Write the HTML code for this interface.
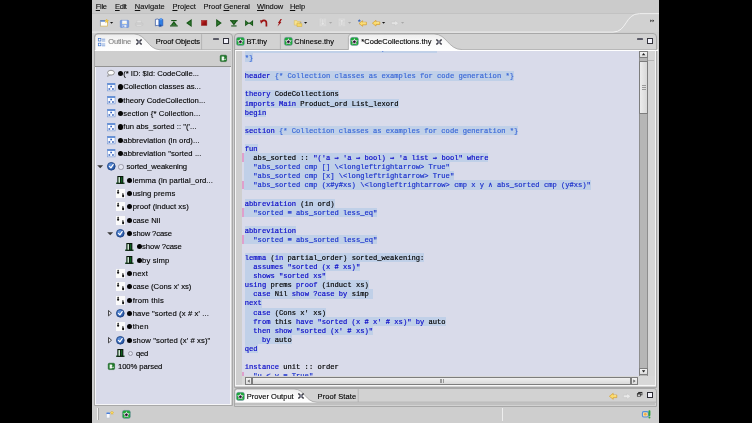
<!DOCTYPE html>
<html><head><meta charset="utf-8"><title>IDE</title><style>
html,body{margin:0;padding:0;background:#000;}
body{width:752px;height:423px;position:relative;overflow:hidden;font-family:"Liberation Sans", sans-serif;}
#root{position:absolute;left:0;top:0;width:752px;height:423px;will-change:transform;transform:translateZ(0);filter:blur(0.3px);}
.t{position:absolute;white-space:pre;line-height:10px;font-family:"Liberation Sans", sans-serif;-webkit-text-stroke:0.12px;}
.m{position:absolute;white-space:pre;font-family:"Liberation Mono", monospace;font-size:7.12px;line-height:9px;height:9px;-webkit-text-stroke:0.18px;}
.m i{font-style:normal;}
svg{position:absolute;overflow:visible;}
u{text-decoration:underline;text-decoration-thickness:0.6px;text-underline-offset:0.6px;}
</style></head><body><div id="root">
<div style="position:absolute;left:92.00px;top:0.00px;width:567.00px;height:423.00px;background:#cecece;"></div>
<div style="position:absolute;left:92.00px;top:0.00px;width:567.00px;height:13.20px;background:#cbcbcb;"></div>
<div style="position:absolute;left:92.00px;top:12.80px;width:567.00px;height:1.00px;background:#c2c2c2;"></div>
<div style="position:absolute;left:92.00px;top:13.90px;width:567.00px;height:18.60px;background:#d1d1d1;"></div>
<span class="t" id="t0" style="left:95.70px;top:1.70px;font-size:7.5px;color:#111;letter-spacing:-0.277px;"><u>F</u>ile</span>
<span class="t" id="t1" style="left:115.00px;top:1.70px;font-size:7.5px;color:#111;letter-spacing:-0.359px;"><u>E</u>dit</span>
<span class="t" id="t2" style="left:134.80px;top:1.70px;font-size:7.5px;color:#111;letter-spacing:0.049px;"><u>N</u>avigate</span>
<span class="t" id="t3" style="left:172.40px;top:1.70px;font-size:7.5px;color:#111;letter-spacing:0.034px;"><u>P</u>roject</span>
<span class="t" id="t4" style="left:203.60px;top:1.70px;font-size:7.5px;color:#111;letter-spacing:-0.025px;">Proof <u>G</u>eneral</span>
<span class="t" id="t5" style="left:257.00px;top:1.70px;font-size:7.5px;color:#111;letter-spacing:-0.117px;"><u>W</u>indow</span>
<span class="t" id="t6" style="left:289.90px;top:1.70px;font-size:7.5px;color:#111;letter-spacing:-0.084px;"><u>H</u>elp</span>
<svg style="left:100.00px;top:19.20px" width="8.6" height="7.6" viewBox="0 0 8.6 7.6"><rect x="0.4" y="1.5" width="7" height="5.6" fill="#fdfdfb" stroke="#d9b44a" stroke-width="0.7"/><path d="M0.1 1.2h5.2v1.5h-5.2z" fill="#4f7fd0"/><path d="M0.4 1.5v5.6" stroke="#8ea6d8" stroke-width="0.6"/><path d="M6.7 0l.6 1.3 1.3.2-1 .9.3 1.4-1.2-.7-1.2.7.3-1.4-1-.9 1.3-.2z" fill="#f6cf45" stroke="#cfa02a" stroke-width="0.3"/></svg>
<svg style="left:110.20px;top:22.40px" width="3.2" height="1.8" viewBox="0 0 3.2 1.8"><path d="M0 0h3.2l-1.6 1.7z" fill="#111"/></svg>
<svg style="left:120.00px;top:19.50px" width="9" height="7.8" viewBox="0 0 9 7.8"><rect x="0.35" y="0.35" width="8.3" height="7.1" rx="0.7" fill="#7fa3e3" stroke="#6a8fd6" stroke-width="0.7"/><rect x="2.2" y="0.6" width="4.6" height="3.5" fill="#f6f8fd"/><rect x="2.2" y="2.9" width="4.6" height="0.7" fill="#f3e7b0"/><rect x="2.6" y="4.9" width="3.8" height="2.5" fill="#e6ecf8"/><rect x="3.2" y="5.4" width="1.1" height="1.7" fill="#6a8fd6"/></svg>
<svg style="left:135.30px;top:20.00px" width="8.2" height="6.6" viewBox="0 0 8.2 6.6"><rect x="2" y="0.3" width="4.2" height="2.8" fill="#dedede" stroke="#c9c9c9" stroke-width="0.5"/><rect x="0.3" y="2.8" width="7.6" height="3" rx="0.9" fill="#cfcfcf" stroke="#c2c2c2" stroke-width="0.5"/><rect x="1.5" y="4.9" width="5.2" height="1.4" fill="#dcdcdc" stroke="#c6c6c6" stroke-width="0.4"/></svg>
<svg style="left:155.00px;top:17.80px" width="8.2" height="9.4" viewBox="0 0 8.2 9.4"><path d="M0.4 1.4q2-.9 3.7.2v6.4q-1.7-1.1-3.7-.2z" fill="#f8fafe" stroke="#2c4f9c" stroke-width="0.7"/><path d="M7.8 1.4q-2-.9-3.7.2v6.4q1.7-1.1 3.7-.2z" fill="#2f7fe4" stroke="#2458b8" stroke-width="0.7"/><path d="M4.6 0.4q1.2-.6 2.4-.2v2q-1.2-.4-2.4.2z" fill="#5b9bee"/><path d="M4.4 6.6v2.6l1-.8 1 .8v-2.4z" fill="#1f4c9e"/></svg>
<svg style="left:170.30px;top:19.80px" width="7.8" height="6.6" viewBox="0 0 7.8 6.6"><path d="M1.2 0h5.4v1.1h-5.4z" fill="#155415"/><path d="M3.9 1.1l3.3 4.3h-6.6z" fill="#155415"/><path d="M3.9 2.9l1.5 2h-3z" fill="#347f34"/><path d="M0 5.4h7.8v1.1h-7.8z" fill="#155415"/></svg>
<svg style="left:186.10px;top:18.80px" width="5.9" height="8.2" viewBox="0 0 5.9 8.2"><path d="M5.7 0.1v8l-5.6-4z" fill="#155415"/><path d="M4.6 2.3v3.6l-2.5-1.8z" fill="#347f34"/></svg>
<svg style="left:201.00px;top:19.90px" width="6.2" height="5.8" viewBox="0 0 6.2 5.8"><defs><linearGradient id="rg" x1="0" y1="0" x2="1" y2="1"><stop offset="0" stop-color="#c84040"/><stop offset="0.45" stop-color="#a41414"/><stop offset="1" stop-color="#7e0a0a"/></linearGradient></defs><rect x="0.3" y="0.3" width="5.6" height="5.2" fill="url(#rg)" stroke="#9a2a2a" stroke-width="0.5"/></svg>
<svg style="left:216.10px;top:18.80px" width="5.9" height="8.2" viewBox="0 0 5.9 8.2"><path d="M0.2 0.1v8l5.6-4z" fill="#155415"/><path d="M1.3 2.3v3.6l2.5-1.8z" fill="#347f34"/></svg>
<svg style="left:230.30px;top:19.80px" width="7.8" height="6.6" viewBox="0 0 7.8 6.6"><path d="M0 0.1h7.8v1.1h-7.8z" fill="#155415"/><path d="M3.9 5.4l3.3-4.3h-6.6z" fill="#155415"/><path d="M3.9 3.6l1.5-2h-3z" fill="#347f34"/><path d="M1.2 5.4h5.4v1.1h-5.4z" fill="#155415"/></svg>
<svg style="left:244.70px;top:19.70px" width="8.2" height="6.4" viewBox="0 0 8.2 6.4"><path d="M0.1 0.1v6.2l4-3.1z" fill="#155415"/><path d="M8.1 0.1v6.2l-4-3.1z" fill="#155415"/><path d="M1.1 2v2.4l1.6-1.2zM7.1 2v2.4l-1.6-1.2z" fill="#347f34"/><path d="M3.5 2.4h1.2v1.6h-1.2z" fill="#155415"/></svg>
<svg style="left:259.80px;top:19.20px" width="7.6" height="7.4" viewBox="0 0 7.6 7.4"><path d="M6.4 7.4V3.9q0-2.5-2.4-2.5q-1.3 0-2 .9" fill="none" stroke="#9c1414" stroke-width="1.7"/><path d="M0 1.2l3.6 0.5-2.6 3z" fill="#9c1414"/></svg>
<svg style="left:276.80px;top:19.20px" width="5" height="7.4" viewBox="0 0 5 7.4"><path d="M3.6 0l1.3.1-1.6 3 1.1.1-3.9 4.2 1.5-3.4-1.1-.1z" fill="#9c1414"/></svg>
<svg style="left:294.00px;top:19.70px" width="8.2" height="6.8" viewBox="0 0 8.2 6.8"><path d="M0.3 0.6h2.6l.6.9h3.4v3.6h-6.6z" fill="#f7e291" stroke="#d9bb55" stroke-width="0.5"/><path d="M3 3h2l.5.7h2.4v2.8h-4.9z" fill="#f5d768" stroke="#cfa83a" stroke-width="0.5"/><rect x="5.6" y="2.2" width="1.6" height="1" fill="#9a9a9a"/></svg>
<svg style="left:303.90px;top:22.20px" width="3.2" height="1.8" viewBox="0 0 3.2 1.8"><path d="M0 0h3.2l-1.6 1.7z" fill="#111"/></svg>
<svg style="left:318.80px;top:18.20px" width="7.6" height="9" viewBox="0 0 7.6 9"><rect x="0.3" y="0.3" width="7" height="8.2" rx="0.8" fill="#dadada" stroke="#d0d0d0" stroke-width="0.4"/><path d="M3 1h1.6v4h1.3l-2.1 2.6-2.1-2.6h1.3z" fill="#e6e6e6" stroke="#c8c8c8" stroke-width="0.4"/></svg>
<svg style="left:328.60px;top:21.80px" width="3.2" height="1.8" viewBox="0 0 3.2 1.8"><path d="M0 0h3.2l-1.6 1.7z" fill="#a8a8a8"/></svg>
<svg style="left:338.20px;top:18.20px" width="7.6" height="9" viewBox="0 0 7.6 9"><rect x="0.3" y="0.3" width="7" height="8.2" rx="0.8" fill="#dadada" stroke="#d0d0d0" stroke-width="0.4"/><path d="M3 7.6h1.6v-4h1.3l-2.1-2.6-2.1 2.6h1.3z" fill="#e6e6e6" stroke="#c8c8c8" stroke-width="0.4"/></svg>
<svg style="left:347.90px;top:21.80px" width="3.2" height="1.8" viewBox="0 0 3.2 1.8"><path d="M0 0h3.2l-1.6 1.7z" fill="#a8a8a8"/></svg>
<svg style="left:357.90px;top:19.40px" width="8.8" height="7.4" viewBox="0 0 8.8 7.4"><path d="M8.4 3.2v2.6h-3.8v1.5l-3.6-2.8 3.6-2.8v1.5z" fill="#fbdc6e" stroke="#d2941c" stroke-width="0.6"/><path d="M4.8 3.8h3" stroke="#fdeeb0" stroke-width="0.6"/><path d="M1.3 0l.5 1 1 .2-.7.7.2 1-1-.5-1 .5.2-1-.7-.7 1-.2z" fill="#3f68b8"/></svg>
<svg style="left:372.20px;top:19.90px" width="8.2" height="6.4" viewBox="0 0 8.2 6.4"><path d="M7.8 1.9v2.6h-3.8v1.6l-3.6-2.9 3.6-2.9v1.6z" fill="#fbdc6e" stroke="#d2941c" stroke-width="0.6"/><path d="M4.2 2.5h3" stroke="#fdeeb0" stroke-width="0.6"/></svg>
<svg style="left:381.80px;top:22.20px" width="3.2" height="1.8" viewBox="0 0 3.2 1.8"><path d="M0 0h3.2l-1.6 1.7z" fill="#111"/></svg>
<svg style="left:391.10px;top:19.90px" width="8" height="6.4" viewBox="0 0 8 6.4"><path d="M0.4 1.9v2.6h3.6v1.6l3.6-2.9-3.6-2.9v1.6z" fill="#e4e4e4" stroke="#c8c8c8" stroke-width="0.6"/></svg>
<svg style="left:401.10px;top:22.20px" width="3.2" height="1.8" viewBox="0 0 3.2 1.8"><path d="M0 0h3.2l-1.6 1.7z" fill="#a8a8a8"/></svg>
<svg style="left:92.00px;top:0.00px" width="567" height="40" viewBox="0 0 567 40"><path d="M0 32.1H521C535 32.1 533 13.6 547.5 13.6H567" fill="none" stroke="#f4f4f4" stroke-width="0.9"/><path d="M558.4 19.4l1.5 1.4-1.5 1.4zM560.6 19.4l1.5 1.4-1.5 1.4z" fill="#111"/></svg>
<div style="position:absolute;left:94.0px;top:33.3px;width:137.3px;height:371.2px;border:0.8px solid #a8a8a8;border-radius:4px 4px 0 0;background:#d2d2d2;box-sizing:content-box"></div>
<div style="position:absolute;left:94.80px;top:50.20px;width:136.70px;height:16.60px;background:#cecece;"></div>
<div style="position:absolute;left:94.80px;top:66.10px;width:136.70px;height:0.80px;background:#939393;"></div>
<div style="position:absolute;left:94.80px;top:49.80px;width:136.70px;height:0.80px;background:#f2f2f2;"></div>
<div style="position:absolute;left:94.90px;top:66.80px;width:136.60px;height:338.20px;background:#f6f6f8;"></div>
<div style="position:absolute;left:96.20px;top:66.80px;width:133.80px;height:336.80px;background:#d9dbea;"></div>
<div style="position:absolute;left:234.0px;top:33.3px;width:421.20000000000005px;height:352.4px;border:0.8px solid #a8a8a8;border-radius:4px 4px 0 0;background:#d2d2d2;box-sizing:content-box"></div>
<div style="position:absolute;left:234.0px;top:388.4px;width:421.20000000000005px;height:16.200000000000045px;border:0.8px solid #a8a8a8;border-radius:3px 3px 0 0;background:#d2d2d2;box-sizing:content-box"></div>
<svg style="left:234.00px;top:33.00px" width="424" height="18" viewBox="0 0 424 18"><defs><linearGradient id="tg" x1="0" y1="0" x2="0" y2="1"><stop offset="0" stop-color="#ececec"/><stop offset="0.55" stop-color="#fbfbfb"/><stop offset="1" stop-color="#ffffff"/></linearGradient></defs><path d="M114.4 17V4.4Q114.4 1 117.6 1H200C213 1 214 16.6 228 16.6H424V18H114.4z" fill="url(#tg)"/><path d="M0.6 16.6H114.4V4.4Q114.4 1 117.6 1H200C213 1 214 16.6 228 16.6H423" fill="none" stroke="#9c9c9c" stroke-width="0.7"/><path d="M46.4 1.2V16.4" stroke="#a8a8a8" stroke-width="0.7"/></svg>
<div style="position:absolute;left:234.80px;top:50.00px;width:420.60px;height:1.00px;background:#ffffff;"></div>
<svg style="left:236.10px;top:37.10px" width="8.8" height="8.8" viewBox="0 0 10 10"><rect x="0.4" y="0.4" width="9.2" height="9.2" rx="2.2" fill="#1da83a" stroke="#8f86c4" stroke-width="0.5"/><path d="M5 1.3l1.15 2.5 2.7.3-2 1.85.55 2.7L5 7.3 2.6 8.65l.55-2.7-2-1.85 2.7-.3z" fill="#e9dcea"/><path d="M5 3.3l.65 1.3 1.4.2-1 1 .25 1.45L5 6.55l-1.3.7.25-1.45-1-1 1.4-.2z" fill="#2a0a2e"/></svg>
<span class="t" id="t7" style="left:246.40px;top:37.20px;font-size:7.5px;color:#000;letter-spacing:-0.024px;">BT.thy</span>
<svg style="left:284.10px;top:37.10px" width="8.8" height="8.8" viewBox="0 0 10 10"><rect x="0.4" y="0.4" width="9.2" height="9.2" rx="2.2" fill="#1da83a" stroke="#8f86c4" stroke-width="0.5"/><path d="M5 1.3l1.15 2.5 2.7.3-2 1.85.55 2.7L5 7.3 2.6 8.65l.55-2.7-2-1.85 2.7-.3z" fill="#e9dcea"/><path d="M5 3.3l.65 1.3 1.4.2-1 1 .25 1.45L5 6.55l-1.3.7.25-1.45-1-1 1.4-.2z" fill="#2a0a2e"/></svg>
<span class="t" id="t8" style="left:294.20px;top:37.20px;font-size:7.5px;color:#000;letter-spacing:0.026px;">Chinese.thy</span>
<svg style="left:350.10px;top:37.10px" width="8.8" height="8.8" viewBox="0 0 10 10"><rect x="0.4" y="0.4" width="9.2" height="9.2" rx="2.2" fill="#1da83a" stroke="#8f86c4" stroke-width="0.5"/><path d="M5 1.3l1.15 2.5 2.7.3-2 1.85.55 2.7L5 7.3 2.6 8.65l.55-2.7-2-1.85 2.7-.3z" fill="#e9dcea"/><path d="M5 3.3l.65 1.3 1.4.2-1 1 .25 1.45L5 6.55l-1.3.7.25-1.45-1-1 1.4-.2z" fill="#2a0a2e"/></svg>
<span class="t" id="t9" style="left:361.30px;top:37.20px;font-size:7.5px;color:#000;letter-spacing:0.029px;">*CodeCollections.thy</span>
<svg style="left:435.90px;top:38.80px" width="6" height="6" viewBox="0 0 6 6"><path d="M0.9 0.9L5.1 5.1M5.1 0.9L0.9 5.1" stroke="#22222c" stroke-width="1.4" stroke-linecap="square"/><path d="M1.7 1.7L4.3 4.3M4.3 1.7L1.7 4.3" stroke="#b8bcd0" stroke-width="0.6"/></svg>
<div style="position:absolute;left:637.40px;top:38.00px;width:5.60px;height:1.90px;background:#5a5a66;border-radius:0.4px"></div>
<div style="position:absolute;left:646.9px;top:37.8px;width:6.1px;height:5.8px;box-sizing:border-box;border:0.55px solid #33333c;border-top-width:1.4px;background:#f2f2fa"></div>
<div style="position:absolute;left:234.80px;top:51.00px;width:7.20px;height:334.20px;background:#cfcfcf;"></div>
<div style="position:absolute;left:234.80px;top:51.00px;width:1.20px;height:334.20px;background:#f4f4f4;"></div>
<div style="position:absolute;left:241.90px;top:51.00px;width:397.30px;height:325.30px;background:#d9dbea;"></div>
<div style="position:absolute;left:234.8px;top:51.0px;width:404.40000000000003px;height:325.3px;overflow:hidden">
<div style="position:absolute;left:10.00px;top:-6.89px;width:192.28px;height:9.14px;background:#c0d0e8;"></div>
<div class="m" style="left:10.00px;top:-5.99px;letter-spacing:0.0063px"><i style="color:#3a68d8">    Author:     Florian Haftmann, TU Muenchen</i></div>
<div style="position:absolute;left:10.00px;top:2.20px;width:8.55px;height:9.14px;background:#c0d0e8;"></div>
<div class="m" style="left:10.00px;top:3.10px;letter-spacing:0.0063px"><i style="color:#3a68d8">*}</i></div>
<div style="position:absolute;left:10.00px;top:20.38px;width:269.20px;height:9.14px;background:#c0d0e8;"></div>
<div class="m" style="left:10.00px;top:21.28px;letter-spacing:0.0063px"><i style="color:#0a0ac8">header</i><i style="color:#3a68d8"> {* Collection classes as examples for code generation *}</i></div>
<div style="position:absolute;left:10.00px;top:38.55px;width:94.01px;height:9.14px;background:#c0d0e8;"></div>
<div class="m" style="left:10.00px;top:39.45px;letter-spacing:0.0063px"><i style="color:#0a0ac8">theory</i><i style="color:#000"> CodeCollections</i></div>
<div style="position:absolute;left:10.00px;top:47.64px;width:153.83px;height:9.14px;background:#c0d0e8;"></div>
<div class="m" style="left:10.00px;top:48.54px;letter-spacing:0.0063px"><i style="color:#0a0ac8">imports</i><i style="color:#0a0ac8"> Main</i><i style="color:#000"> Product_ord List_lexord</i></div>
<div style="position:absolute;left:10.00px;top:56.73px;width:21.36px;height:9.14px;background:#c0d0e8;"></div>
<div class="m" style="left:10.00px;top:57.63px;letter-spacing:0.0063px"><i style="color:#0a0ac8">begin</i></div>
<div style="position:absolute;left:10.00px;top:74.90px;width:273.47px;height:9.14px;background:#c0d0e8;"></div>
<div class="m" style="left:10.00px;top:75.80px;letter-spacing:0.0063px"><i style="color:#0a0ac8">section</i><i style="color:#3a68d8"> {* Collection classes as examples for code generation *}</i></div>
<div style="position:absolute;left:10.00px;top:93.08px;width:12.82px;height:9.14px;background:#c0d0e8;"></div>
<div class="m" style="left:10.00px;top:93.98px;letter-spacing:0.0063px"><i style="color:#0a0ac8">fun</i></div>
<div style="position:absolute;left:9.40px;top:102.17px;width:244.16px;height:9.14px;background:#c0d0e8;"></div>
<div class="m" style="left:10.00px;top:103.07px;letter-spacing:0.0063px"><i style="color:#000">  abs_sorted :: </i><i style="color:#0a0ac8">"('a ⇒ 'a ⇒ bool) ⇒ 'a list ⇒ bool"</i><i style="color:#0a0ac8"> where</i></div>
<div style="position:absolute;left:9.40px;top:111.26px;width:205.70px;height:9.14px;background:#c0d0e8;"></div>
<div class="m" style="left:10.00px;top:112.16px;letter-spacing:0.0063px"><i style="color:#1a30cc">  "abs_sorted cmp [] \&lt;longleftrightarrow&gt; True"</i></div>
<div style="position:absolute;left:9.40px;top:120.34px;width:209.98px;height:9.14px;background:#c0d0e8;"></div>
<div class="m" style="left:10.00px;top:121.24px;letter-spacing:0.0063px"><i style="color:#1a30cc">  "abs_sorted cmp [x] \&lt;longleftrightarrow&gt; True"</i></div>
<div style="position:absolute;left:9.40px;top:129.43px;width:346.71px;height:9.14px;background:#c0d0e8;"></div>
<div class="m" style="left:10.00px;top:130.33px;letter-spacing:0.0063px"><i style="color:#1a30cc">  "abs_sorted cmp (x#y#xs) \&lt;longleftrightarrow&gt; cmp x y ∧ abs_sorted cmp (y#xs)"</i></div>
<div style="position:absolute;left:10.00px;top:147.61px;width:89.73px;height:9.14px;background:#c0d0e8;"></div>
<div class="m" style="left:10.00px;top:148.51px;letter-spacing:0.0063px"><i style="color:#0a0ac8">abbreviation</i><i style="color:#000"> (in ord)</i></div>
<div style="position:absolute;left:9.40px;top:156.70px;width:133.06px;height:9.14px;background:#c0d0e8;"></div>
<div class="m" style="left:10.00px;top:157.60px;letter-spacing:0.0063px"><i style="color:#1a30cc">  "sorted ≡ abs_sorted less_eq"</i></div>
<div style="position:absolute;left:10.00px;top:174.87px;width:51.28px;height:9.14px;background:#c0d0e8;"></div>
<div class="m" style="left:10.00px;top:175.77px;letter-spacing:0.0063px"><i style="color:#0a0ac8">abbreviation</i></div>
<div style="position:absolute;left:9.40px;top:183.96px;width:133.06px;height:9.14px;background:#c0d0e8;"></div>
<div class="m" style="left:10.00px;top:184.86px;letter-spacing:0.0063px"><i style="color:#1a30cc">  "sorted ≡ abs_sorted less_eq"</i></div>
<div style="position:absolute;left:10.00px;top:202.14px;width:179.47px;height:9.14px;background:#c0d0e8;"></div>
<div class="m" style="left:10.00px;top:203.04px;letter-spacing:0.0063px"><i style="color:#0a0ac8">lemma</i><i style="color:#000"> (</i><i style="color:#0a0ac8">in</i><i style="color:#000"> partial_order) sorted_weakening:</i></div>
<div style="position:absolute;left:10.00px;top:211.22px;width:115.37px;height:9.14px;background:#c0d0e8;"></div>
<div class="m" style="left:10.00px;top:212.12px;letter-spacing:0.0063px"><i style="color:#0a0ac8">  assumes "sorted (x # xs)"</i></div>
<div style="position:absolute;left:10.00px;top:220.31px;width:81.19px;height:9.14px;background:#c0d0e8;"></div>
<div class="m" style="left:10.00px;top:221.21px;letter-spacing:0.0063px"><i style="color:#0a0ac8">  shows "sorted xs"</i></div>
<div style="position:absolute;left:10.00px;top:229.40px;width:123.92px;height:9.14px;background:#c0d0e8;"></div>
<div class="m" style="left:10.00px;top:230.30px;letter-spacing:0.0063px"><i style="color:#0a0ac8">using</i><i style="color:#000"> prems </i><i style="color:#0a0ac8">proof</i><i style="color:#000"> (induct xs)</i></div>
<div style="position:absolute;left:10.00px;top:238.49px;width:128.19px;height:9.14px;background:#c0d0e8;"></div>
<div class="m" style="left:10.00px;top:239.39px;letter-spacing:0.0063px"><i style="color:#0a0ac8">  case</i><i style="color:#000"> Nil </i><i style="color:#0a0ac8">show ?case by</i><i style="color:#000"> simp </i></div>
<div style="position:absolute;left:10.00px;top:247.58px;width:17.09px;height:9.14px;background:#c0d0e8;"></div>
<div class="m" style="left:10.00px;top:248.48px;letter-spacing:0.0063px"><i style="color:#0a0ac8">next</i></div>
<div style="position:absolute;left:10.00px;top:256.66px;width:81.19px;height:9.14px;background:#c0d0e8;"></div>
<div class="m" style="left:10.00px;top:257.56px;letter-spacing:0.0063px"><i style="color:#0a0ac8">  case</i><i style="color:#000"> (Cons x' xs)</i></div>
<div style="position:absolute;left:10.00px;top:265.75px;width:200.83px;height:9.14px;background:#c0d0e8;"></div>
<div class="m" style="left:10.00px;top:266.65px;letter-spacing:0.0063px"><i style="color:#0a0ac8">  from</i><i style="color:#000"> this </i><i style="color:#0a0ac8">have "sorted (x # x' # xs)" by</i><i style="color:#000"> auto</i></div>
<div style="position:absolute;left:10.00px;top:274.84px;width:128.19px;height:9.14px;background:#c0d0e8;"></div>
<div class="m" style="left:10.00px;top:275.74px;letter-spacing:0.0063px"><i style="color:#0a0ac8">  then show "sorted (x' # xs)"</i></div>
<div style="position:absolute;left:10.00px;top:283.93px;width:47.00px;height:9.14px;background:#c0d0e8;"></div>
<div class="m" style="left:10.00px;top:284.83px;letter-spacing:0.0063px"><i style="color:#0a0ac8">    by</i><i style="color:#000"> auto</i></div>
<div style="position:absolute;left:10.00px;top:293.02px;width:12.82px;height:9.14px;background:#c0d0e8;"></div>
<div class="m" style="left:10.00px;top:293.92px;letter-spacing:0.0063px"><i style="color:#0a0ac8">qed</i></div>
<div class="m" style="left:10.00px;top:312.09px;letter-spacing:0.0063px"><i style="color:#0a0ac8">instance</i><i style="color:#000"> unit :: order</i></div>
<div class="m" style="left:10.00px;top:321.18px;letter-spacing:0.0063px"><i style="color:#1a30cc">  "u ≤ v ≡ True"</i></div>
<div style="position:absolute;left:7.10px;top:102.42px;width:2.60px;height:8.79px;background:#dfa0cc;"></div>
<div style="position:absolute;left:7.10px;top:129.68px;width:2.60px;height:8.79px;background:#dfa0cc;"></div>
<div style="position:absolute;left:7.10px;top:156.95px;width:2.60px;height:8.79px;background:#dfa0cc;"></div>
<div style="position:absolute;left:7.10px;top:184.21px;width:2.60px;height:8.79px;background:#dfa0cc;"></div>
<div style="position:absolute;left:7.10px;top:320.53px;width:2.60px;height:8.79px;background:#dfa0cc;"></div>
</div>
<div style="position:absolute;left:639.40px;top:51.00px;width:8.40px;height:325.40px;background:#b6b6b6;box-sizing:border-box;border-left:0.7px solid #8e8e8e;border-right:0.7px solid #8e8e8e"></div>
<div style="position:absolute;left:639.4px;top:50.9px;width:8.4px;height:6.8px;box-sizing:border-box;border:0.7px solid #7d7d7d;background:linear-gradient(#f4f4f4,#dcdcdc);border-radius:0.8px"></div>
<svg style="left:0.00px;top:0.00px" width="1" height="1" viewBox="0 0 1 1"><path d="M641.9 55.3L645.3000000000001 55.3L643.6 53.0z" fill="#222"/></svg>
<div style="position:absolute;left:639.4px;top:61.4px;width:8.4px;height:52.8px;box-sizing:border-box;border:0.7px solid #7d7d7d;background:linear-gradient(90deg,#ececec,#d8d8d8);border-radius:0.8px"></div>
<div style="position:absolute;left:641.60px;top:85.40px;width:4.00px;height:0.70px;background:#9a9a9a;"></div>
<div style="position:absolute;left:641.60px;top:87.00px;width:4.00px;height:0.70px;background:#9a9a9a;"></div>
<div style="position:absolute;left:641.60px;top:88.60px;width:4.00px;height:0.70px;background:#9a9a9a;"></div>
<div style="position:absolute;left:639.4px;top:367.6px;width:8.4px;height:7.4px;box-sizing:border-box;border:0.7px solid #7d7d7d;background:linear-gradient(#f4f4f4,#dcdcdc);border-radius:0.8px"></div>
<svg style="left:0.00px;top:0.00px" width="1" height="1" viewBox="0 0 1 1"><path d="M641.9 370.3L645.3000000000001 370.3L643.6 372.6z" fill="#222"/></svg>
<div style="position:absolute;left:647.80px;top:51.00px;width:7.00px;height:334.20px;background:#d6d6d6;"></div>
<div style="position:absolute;left:648.40px;top:60.00px;width:6.00px;height:0.80px;background:#b4b4b4;"></div>
<div style="position:absolute;left:241.90px;top:376.30px;width:414.00px;height:8.90px;background:#d8d8d8;"></div>
<div style="position:absolute;left:245.00px;top:377.30px;width:393.40px;height:7.60px;background:#b6b6b6;box-sizing:border-box;border:0.7px solid #8e8e8e"></div>
<div style="position:absolute;left:245.0px;top:377.3px;width:7.4px;height:7.6px;box-sizing:border-box;border:0.7px solid #7d7d7d;background:linear-gradient(#f4f4f4,#dcdcdc);border-radius:0.8px"></div>
<svg style="left:0.00px;top:0.00px" width="1" height="1" viewBox="0 0 1 1"><path d="M249.7 379.40000000000003L249.7 382.8L247.39999999999998 381.1z" fill="#666"/></svg>
<div style="position:absolute;left:252.4px;top:377.3px;width:378.2px;height:7.6px;box-sizing:border-box;border:0.7px solid #7d7d7d;background:linear-gradient(#f0f0f0,#d8d8d8);border-radius:0.8px"></div>
<div style="position:absolute;left:439.60px;top:379.40px;width:0.70px;height:3.40px;background:#9a9a9a;"></div>
<div style="position:absolute;left:441.20px;top:379.40px;width:0.70px;height:3.40px;background:#9a9a9a;"></div>
<div style="position:absolute;left:442.80px;top:379.40px;width:0.70px;height:3.40px;background:#9a9a9a;"></div>
<div style="position:absolute;left:630.6px;top:377.3px;width:7.4px;height:7.6px;box-sizing:border-box;border:0.7px solid #7d7d7d;background:linear-gradient(#f4f4f4,#dcdcdc);border-radius:0.8px"></div>
<svg style="left:0.00px;top:0.00px" width="1" height="1" viewBox="0 0 1 1"><path d="M633.3000000000001 379.40000000000003L633.3000000000001 382.8L635.6 381.1z" fill="#666"/></svg>
<div style="position:absolute;left:234.80px;top:385.20px;width:420.60px;height:0.90px;background:#f8f8f8;"></div>
<div style="position:absolute;left:654.60px;top:51.00px;width:0.90px;height:334.50px;background:#f4f4f4;"></div>
<svg style="left:94.00px;top:33.00px" width="138.6" height="18" viewBox="0 0 138.6 18"><path d="M0.8 17.6V4.4Q0.8 1 4 1H40C52.5 1 53.5 16.8 66.5 16.8H137V18H0.8z" fill="url(#tg)"/><path d="M0.8 17V4.4Q0.8 1 4 1H40C52.5 1 53.5 16.8 66.5 16.8H137" fill="none" stroke="#9c9c9c" stroke-width="0.7"/><path d="M107.6 1.2V16.6" stroke="#a8a8a8" stroke-width="0.7"/></svg>
<svg style="left:98.00px;top:37.60px" width="7.4" height="8.6" viewBox="0 0 7.4 8.6"><rect x="0.3" y="0.4" width="2.6" height="2.6" fill="#fff" stroke="#3a6fc8" stroke-width="0.7"/><rect x="0.3" y="5.2" width="2.6" height="2.6" fill="#fff" stroke="#3a6fc8" stroke-width="0.7"/><path d="M4 1.2h3.2M4 3h3.2M4 6h3.2M4 7.8h3.2" stroke="#6a93d8" stroke-width="0.8"/></svg>
<span class="t" id="t10" style="left:108.20px;top:37.20px;font-size:7.5px;color:#858585;letter-spacing:-0.138px;">Outline</span>
<svg style="left:135.50px;top:38.80px" width="6" height="6" viewBox="0 0 6 6"><path d="M0.9 0.9L5.1 5.1M5.1 0.9L0.9 5.1" stroke="#22222c" stroke-width="1.4" stroke-linecap="square"/><path d="M1.7 1.7L4.3 4.3M4.3 1.7L1.7 4.3" stroke="#b8bcd0" stroke-width="0.6"/></svg>
<span class="t" id="t11" style="left:155.80px;top:37.20px;font-size:7.5px;color:#000;letter-spacing:-0.095px;">Proof Objects</span>
<div style="position:absolute;left:213.20px;top:38.00px;width:5.60px;height:1.90px;background:#5a5a66;border-radius:0.4px"></div>
<div style="position:absolute;left:223px;top:37.8px;width:6.1px;height:5.8px;box-sizing:border-box;border:0.55px solid #33333c;border-top-width:1.4px;background:#f2f2fa"></div>
<svg style="left:220.00px;top:55.00px" width="6.8" height="6.8" viewBox="0 0 10 10"><rect x="0.3" y="0.3" width="9.4" height="9.4" rx="1.6" fill="#1f7a2a" stroke="#0f5018" stroke-width="0.7"/><path d="M2.4 2.2h2.4q1.6 0 1.6 1.4t-1.6 1.4q1.8 0 1.8 1.5t-1.8 1.5h-2.4z" fill="#f2f8f2"/><rect x="6.6" y="5.6" width="2.2" height="1.2" fill="#f2f8f2"/></svg>
<svg style="left:107.00px;top:70.10px" width="7.6" height="6.8" viewBox="0 0 7.6 6.8"><ellipse cx="4" cy="2.7" rx="3.4" ry="2.4" fill="#fdfdfd" stroke="#6e6e6e" stroke-width="0.7"/><path d="M1.6 4.2L0.5 6.4 3.2 5" fill="#fdfdfd" stroke="#6e6e6e" stroke-width="0.6"/></svg>
<div style="position:absolute;left:118.00px;top:71.15px;width:5.1px;height:5.1px;border-radius:50%;background:#050505"></div>
<span class="t" id="t12" style="left:123.30px;top:69.10px;font-size:7.7px;color:#000;letter-spacing:-0.055px;">(* ID: $Id: CodeColle...</span>
<svg style="left:107.00px;top:82.62px" width="8.4" height="8.2" viewBox="0 0 8.4 8.2"><rect x="0.35" y="0.35" width="7.7" height="7.5" fill="#fbfcff" stroke="#7f9fd6" stroke-width="0.7"/><rect x="0.35" y="0.35" width="7.7" height="1.5" fill="#4d7fd0"/><rect x="3.3" y="2.7" width="1.7" height="1.6" fill="#3a66c0"/><rect x="1.5" y="5.2" width="1.7" height="1.6" fill="#3a66c0"/><rect x="5.1" y="5.2" width="1.7" height="1.6" fill="#3a66c0"/></svg>
<div style="position:absolute;left:118.00px;top:84.48px;width:5.1px;height:5.1px;border-radius:50%;background:#050505"></div>
<span class="t" id="t13" style="left:123.30px;top:82.42px;font-size:7.7px;color:#000;letter-spacing:-0.029px;">Collection classes as...</span>
<svg style="left:107.00px;top:95.95px" width="8.4" height="8.2" viewBox="0 0 8.4 8.2"><rect x="0.35" y="0.35" width="7.7" height="7.5" fill="#fbfcff" stroke="#7f9fd6" stroke-width="0.7"/><rect x="0.35" y="0.35" width="7.7" height="1.5" fill="#4d7fd0"/><rect x="3.3" y="2.7" width="1.7" height="1.6" fill="#3a66c0"/><rect x="1.5" y="5.2" width="1.7" height="1.6" fill="#3a66c0"/><rect x="5.1" y="5.2" width="1.7" height="1.6" fill="#3a66c0"/></svg>
<div style="position:absolute;left:118.00px;top:97.80px;width:5.1px;height:5.1px;border-radius:50%;background:#050505"></div>
<span class="t" id="t14" style="left:123.30px;top:95.75px;font-size:7.7px;color:#000;letter-spacing:-0.002px;">theory CodeCollection...</span>
<svg style="left:107.00px;top:109.27px" width="8.4" height="8.2" viewBox="0 0 8.4 8.2"><rect x="0.35" y="0.35" width="7.7" height="7.5" fill="#fbfcff" stroke="#7f9fd6" stroke-width="0.7"/><rect x="0.35" y="0.35" width="7.7" height="1.5" fill="#4d7fd0"/><rect x="3.3" y="2.7" width="1.7" height="1.6" fill="#3a66c0"/><rect x="1.5" y="5.2" width="1.7" height="1.6" fill="#3a66c0"/><rect x="5.1" y="5.2" width="1.7" height="1.6" fill="#3a66c0"/></svg>
<div style="position:absolute;left:118.00px;top:111.12px;width:5.1px;height:5.1px;border-radius:50%;background:#050505"></div>
<span class="t" id="t15" style="left:123.30px;top:109.07px;font-size:7.7px;color:#000;letter-spacing:0.114px;">section {* Collection...</span>
<svg style="left:107.00px;top:122.60px" width="8.4" height="8.2" viewBox="0 0 8.4 8.2"><rect x="0.35" y="0.35" width="7.7" height="7.5" fill="#fbfcff" stroke="#7f9fd6" stroke-width="0.7"/><rect x="0.35" y="0.35" width="7.7" height="1.5" fill="#4d7fd0"/><rect x="3.3" y="2.7" width="1.7" height="1.6" fill="#3a66c0"/><rect x="1.5" y="5.2" width="1.7" height="1.6" fill="#3a66c0"/><rect x="5.1" y="5.2" width="1.7" height="1.6" fill="#3a66c0"/></svg>
<div style="position:absolute;left:118.00px;top:124.45px;width:5.1px;height:5.1px;border-radius:50%;background:#050505"></div>
<span class="t" id="t16" style="left:123.30px;top:122.40px;font-size:7.7px;color:#000;letter-spacing:0.030px;">fun abs_sorted :: "('...</span>
<svg style="left:107.00px;top:135.93px" width="8.4" height="8.2" viewBox="0 0 8.4 8.2"><rect x="0.35" y="0.35" width="7.7" height="7.5" fill="#fbfcff" stroke="#7f9fd6" stroke-width="0.7"/><rect x="0.35" y="0.35" width="7.7" height="1.5" fill="#4d7fd0"/><rect x="3.3" y="2.7" width="1.7" height="1.6" fill="#3a66c0"/><rect x="1.5" y="5.2" width="1.7" height="1.6" fill="#3a66c0"/><rect x="5.1" y="5.2" width="1.7" height="1.6" fill="#3a66c0"/></svg>
<div style="position:absolute;left:118.00px;top:137.77px;width:5.1px;height:5.1px;border-radius:50%;background:#050505"></div>
<span class="t" id="t17" style="left:123.30px;top:135.72px;font-size:7.7px;color:#000;letter-spacing:0.063px;">abbreviation (in ord)...</span>
<svg style="left:107.00px;top:149.25px" width="8.4" height="8.2" viewBox="0 0 8.4 8.2"><rect x="0.35" y="0.35" width="7.7" height="7.5" fill="#fbfcff" stroke="#7f9fd6" stroke-width="0.7"/><rect x="0.35" y="0.35" width="7.7" height="1.5" fill="#4d7fd0"/><rect x="3.3" y="2.7" width="1.7" height="1.6" fill="#3a66c0"/><rect x="1.5" y="5.2" width="1.7" height="1.6" fill="#3a66c0"/><rect x="5.1" y="5.2" width="1.7" height="1.6" fill="#3a66c0"/></svg>
<div style="position:absolute;left:118.00px;top:151.10px;width:5.1px;height:5.1px;border-radius:50%;background:#050505"></div>
<span class="t" id="t18" style="left:123.30px;top:149.05px;font-size:7.7px;color:#000;letter-spacing:0.064px;">abbreviation "sorted ...</span>
<svg style="left:106.90px;top:162.47px" width="8.6" height="8.6" viewBox="0 0 8.6 8.6"><defs><radialGradient id="bg1" cx="0.35" cy="0.3" r="0.8"><stop offset="0" stop-color="#6496e0"/><stop offset="1" stop-color="#1c4a9a"/></radialGradient></defs><circle cx="4.3" cy="4.3" r="3.85" fill="url(#bg1)" stroke="#173c7c" stroke-width="0.8"/><path d="M2.5 4.4l1.4 1.5 2.3-3.4" fill="none" stroke="#fff" stroke-width="1.3" stroke-linecap="round" stroke-linejoin="round"/></svg>
<svg style="left:97.10px;top:165.47px" width="6.4" height="3.4" viewBox="0 0 6.4 3.4"><path d="M0.2 0.2h6l-3 3z" fill="#3a3a3a"/></svg>
<div style="position:absolute;left:118.20px;top:164.47px;width:5.4px;height:5.4px;border-radius:50%;box-sizing:border-box;border:0.75px solid #9a9aa8;background:#e4e6f2"></div>
<span class="t" id="t19" style="left:126.60px;top:162.37px;font-size:7.7px;color:#000;letter-spacing:-0.125px;">sorted_weakening</span>
<svg style="left:116.00px;top:176.10px" width="8.6" height="8" viewBox="0 0 8.6 8"><rect x="0" y="6.5" width="8.6" height="1.0" fill="#2a8236"/><rect x="1.9" y="0.55" width="4.9" height="6.6" fill="#0f621f" stroke="#08160b" stroke-width="1.1"/><rect x="2.5" y="1.1" width="1.7" height="5.6" fill="#d6e6d8"/><rect x="4.1" y="0.6" width="0.9" height="6.4" fill="#08160b"/><rect x="0.2" y="7.2" width="8.2" height="0.8" fill="#0a2210"/></svg>
<div style="position:absolute;left:127.40px;top:177.75px;width:5.1px;height:5.1px;border-radius:50%;background:#050505"></div>
<span class="t" id="t20" style="left:132.70px;top:175.70px;font-size:7.7px;color:#000;letter-spacing:0.070px;">lemma (in partial_ord...</span>
<svg style="left:115.70px;top:188.93px" width="9" height="9" viewBox="0 0 9 9"><rect x="0" y="0" width="9" height="9" fill="#fafafa"/><circle cx="2.1" cy="1.5" r="0.75" fill="#111"/><ellipse cx="2.1" cy="3.5" rx="1.05" ry="1.3" fill="#111"/><circle cx="6.9" cy="4.9" r="0.75" fill="#111"/><ellipse cx="7.1" cy="6.9" rx="1.05" ry="1.3" fill="#111"/></svg>
<div style="position:absolute;left:127.40px;top:191.07px;width:5.1px;height:5.1px;border-radius:50%;background:#050505"></div>
<span class="t" id="t21" style="left:132.70px;top:189.03px;font-size:7.7px;color:#000;letter-spacing:0.066px;">using prems</span>
<svg style="left:115.70px;top:202.25px" width="9" height="9" viewBox="0 0 9 9"><rect x="0" y="0" width="9" height="9" fill="#fafafa"/><circle cx="2.1" cy="1.5" r="0.75" fill="#111"/><ellipse cx="2.1" cy="3.5" rx="1.05" ry="1.3" fill="#111"/><circle cx="6.9" cy="4.9" r="0.75" fill="#111"/><ellipse cx="7.1" cy="6.9" rx="1.05" ry="1.3" fill="#111"/></svg>
<div style="position:absolute;left:127.40px;top:204.40px;width:5.1px;height:5.1px;border-radius:50%;background:#050505"></div>
<span class="t" id="t22" style="left:132.70px;top:202.35px;font-size:7.7px;color:#000;letter-spacing:0.057px;">proof (induct xs)</span>
<svg style="left:115.70px;top:215.57px" width="9" height="9" viewBox="0 0 9 9"><rect x="0" y="0" width="9" height="9" fill="#fafafa"/><circle cx="2.1" cy="1.5" r="0.75" fill="#111"/><ellipse cx="2.1" cy="3.5" rx="1.05" ry="1.3" fill="#111"/><circle cx="6.9" cy="4.9" r="0.75" fill="#111"/><ellipse cx="7.1" cy="6.9" rx="1.05" ry="1.3" fill="#111"/></svg>
<div style="position:absolute;left:127.40px;top:217.72px;width:5.1px;height:5.1px;border-radius:50%;background:#050505"></div>
<span class="t" id="t23" style="left:132.70px;top:215.67px;font-size:7.7px;color:#000;letter-spacing:0.020px;">case Nil</span>
<svg style="left:116.30px;top:229.10px" width="8.6" height="8.6" viewBox="0 0 8.6 8.6"><defs><radialGradient id="bg1" cx="0.35" cy="0.3" r="0.8"><stop offset="0" stop-color="#6496e0"/><stop offset="1" stop-color="#1c4a9a"/></radialGradient></defs><circle cx="4.3" cy="4.3" r="3.85" fill="url(#bg1)" stroke="#173c7c" stroke-width="0.8"/><path d="M2.5 4.4l1.4 1.5 2.3-3.4" fill="none" stroke="#fff" stroke-width="1.3" stroke-linecap="round" stroke-linejoin="round"/></svg>
<svg style="left:106.50px;top:232.10px" width="6.4" height="3.4" viewBox="0 0 6.4 3.4"><path d="M0.2 0.2h6l-3 3z" fill="#3a3a3a"/></svg>
<div style="position:absolute;left:127.40px;top:231.05px;width:5.1px;height:5.1px;border-radius:50%;background:#050505"></div>
<span class="t" id="t24" style="left:132.70px;top:229.00px;font-size:7.7px;color:#000;letter-spacing:-0.131px;">show ?case</span>
<svg style="left:125.40px;top:242.72px" width="8.6" height="8" viewBox="0 0 8.6 8"><rect x="0" y="6.5" width="8.6" height="1.0" fill="#2a8236"/><rect x="1.9" y="0.55" width="4.9" height="6.6" fill="#0f621f" stroke="#08160b" stroke-width="1.1"/><rect x="2.5" y="1.1" width="1.7" height="5.6" fill="#d6e6d8"/><rect x="4.1" y="0.6" width="0.9" height="6.4" fill="#08160b"/><rect x="0.2" y="7.2" width="8.2" height="0.8" fill="#0a2210"/></svg>
<div style="position:absolute;left:136.80px;top:244.37px;width:5.1px;height:5.1px;border-radius:50%;background:#050505"></div>
<span class="t" id="t25" style="left:142.10px;top:242.32px;font-size:7.7px;color:#000;letter-spacing:-0.091px;">show ?case</span>
<svg style="left:125.40px;top:256.05px" width="8.6" height="8" viewBox="0 0 8.6 8"><rect x="0" y="6.5" width="8.6" height="1.0" fill="#2a8236"/><rect x="1.9" y="0.55" width="4.9" height="6.6" fill="#0f621f" stroke="#08160b" stroke-width="1.1"/><rect x="2.5" y="1.1" width="1.7" height="5.6" fill="#d6e6d8"/><rect x="4.1" y="0.6" width="0.9" height="6.4" fill="#08160b"/><rect x="0.2" y="7.2" width="8.2" height="0.8" fill="#0a2210"/></svg>
<div style="position:absolute;left:136.80px;top:257.70px;width:5.1px;height:5.1px;border-radius:50%;background:#050505"></div>
<span class="t" id="t26" style="left:142.10px;top:255.65px;font-size:7.7px;color:#000;letter-spacing:0.129px;">by simp</span>
<svg style="left:115.70px;top:268.88px" width="9" height="9" viewBox="0 0 9 9"><rect x="0" y="0" width="9" height="9" fill="#fafafa"/><circle cx="2.1" cy="1.5" r="0.75" fill="#111"/><ellipse cx="2.1" cy="3.5" rx="1.05" ry="1.3" fill="#111"/><circle cx="6.9" cy="4.9" r="0.75" fill="#111"/><ellipse cx="7.1" cy="6.9" rx="1.05" ry="1.3" fill="#111"/></svg>
<div style="position:absolute;left:127.40px;top:271.02px;width:5.1px;height:5.1px;border-radius:50%;background:#050505"></div>
<span class="t" id="t27" style="left:132.70px;top:268.98px;font-size:7.7px;color:#000;letter-spacing:0.192px;">next</span>
<svg style="left:115.70px;top:282.20px" width="9" height="9" viewBox="0 0 9 9"><rect x="0" y="0" width="9" height="9" fill="#fafafa"/><circle cx="2.1" cy="1.5" r="0.75" fill="#111"/><ellipse cx="2.1" cy="3.5" rx="1.05" ry="1.3" fill="#111"/><circle cx="6.9" cy="4.9" r="0.75" fill="#111"/><ellipse cx="7.1" cy="6.9" rx="1.05" ry="1.3" fill="#111"/></svg>
<div style="position:absolute;left:127.40px;top:284.35px;width:5.1px;height:5.1px;border-radius:50%;background:#050505"></div>
<span class="t" id="t28" style="left:132.70px;top:282.30px;font-size:7.7px;color:#000;letter-spacing:-0.001px;">case (Cons x' xs)</span>
<svg style="left:115.70px;top:295.52px" width="9" height="9" viewBox="0 0 9 9"><rect x="0" y="0" width="9" height="9" fill="#fafafa"/><circle cx="2.1" cy="1.5" r="0.75" fill="#111"/><ellipse cx="2.1" cy="3.5" rx="1.05" ry="1.3" fill="#111"/><circle cx="6.9" cy="4.9" r="0.75" fill="#111"/><ellipse cx="7.1" cy="6.9" rx="1.05" ry="1.3" fill="#111"/></svg>
<div style="position:absolute;left:127.40px;top:297.67px;width:5.1px;height:5.1px;border-radius:50%;background:#050505"></div>
<span class="t" id="t29" style="left:132.70px;top:295.62px;font-size:7.7px;color:#000;letter-spacing:0.213px;">from this</span>
<svg style="left:116.30px;top:309.05px" width="8.6" height="8.6" viewBox="0 0 8.6 8.6"><defs><radialGradient id="bg1" cx="0.35" cy="0.3" r="0.8"><stop offset="0" stop-color="#6496e0"/><stop offset="1" stop-color="#1c4a9a"/></radialGradient></defs><circle cx="4.3" cy="4.3" r="3.85" fill="url(#bg1)" stroke="#173c7c" stroke-width="0.8"/><path d="M2.5 4.4l1.4 1.5 2.3-3.4" fill="none" stroke="#fff" stroke-width="1.3" stroke-linecap="round" stroke-linejoin="round"/></svg>
<svg style="left:108.10px;top:310.15px" width="3.8" height="6.4" viewBox="0 0 3.8 6.4"><path d="M0.5 0.5v5.4l3-2.7z" fill="#e8e8f0" stroke="#222" stroke-width="0.8"/></svg>
<div style="position:absolute;left:127.40px;top:311.00px;width:5.1px;height:5.1px;border-radius:50%;background:#050505"></div>
<span class="t" id="t30" style="left:132.70px;top:308.95px;font-size:7.7px;color:#000;letter-spacing:0.107px;">have "sorted (x # x' ...</span>
<svg style="left:115.70px;top:322.17px" width="9" height="9" viewBox="0 0 9 9"><rect x="0" y="0" width="9" height="9" fill="#fafafa"/><circle cx="2.1" cy="1.5" r="0.75" fill="#111"/><ellipse cx="2.1" cy="3.5" rx="1.05" ry="1.3" fill="#111"/><circle cx="6.9" cy="4.9" r="0.75" fill="#111"/><ellipse cx="7.1" cy="6.9" rx="1.05" ry="1.3" fill="#111"/></svg>
<div style="position:absolute;left:127.40px;top:324.32px;width:5.1px;height:5.1px;border-radius:50%;background:#050505"></div>
<span class="t" id="t31" style="left:132.70px;top:322.27px;font-size:7.7px;color:#000;letter-spacing:0.258px;">then</span>
<svg style="left:116.30px;top:335.70px" width="8.6" height="8.6" viewBox="0 0 8.6 8.6"><defs><radialGradient id="bg1" cx="0.35" cy="0.3" r="0.8"><stop offset="0" stop-color="#6496e0"/><stop offset="1" stop-color="#1c4a9a"/></radialGradient></defs><circle cx="4.3" cy="4.3" r="3.85" fill="url(#bg1)" stroke="#173c7c" stroke-width="0.8"/><path d="M2.5 4.4l1.4 1.5 2.3-3.4" fill="none" stroke="#fff" stroke-width="1.3" stroke-linecap="round" stroke-linejoin="round"/></svg>
<svg style="left:108.10px;top:336.80px" width="3.8" height="6.4" viewBox="0 0 3.8 6.4"><path d="M0.5 0.5v5.4l3-2.7z" fill="#e8e8f0" stroke="#222" stroke-width="0.8"/></svg>
<div style="position:absolute;left:127.40px;top:337.65px;width:5.1px;height:5.1px;border-radius:50%;background:#050505"></div>
<span class="t" id="t32" style="left:132.70px;top:335.60px;font-size:7.7px;color:#000;letter-spacing:0.086px;">show "sorted (x' # xs)"</span>
<svg style="left:116.00px;top:349.32px" width="8.6" height="8" viewBox="0 0 8.6 8"><rect x="0" y="6.5" width="8.6" height="1.0" fill="#2a8236"/><rect x="1.9" y="0.55" width="4.9" height="6.6" fill="#0f621f" stroke="#08160b" stroke-width="1.1"/><rect x="2.5" y="1.1" width="1.7" height="5.6" fill="#d6e6d8"/><rect x="4.1" y="0.6" width="0.9" height="6.4" fill="#08160b"/><rect x="0.2" y="7.2" width="8.2" height="0.8" fill="#0a2210"/></svg>
<div style="position:absolute;left:127.60px;top:351.02px;width:5.4px;height:5.4px;border-radius:50%;box-sizing:border-box;border:0.75px solid #9a9aa8;background:#e4e6f2"></div>
<span class="t" id="t33" style="left:136.00px;top:348.93px;font-size:7.7px;color:#000;letter-spacing:-0.276px;">qed</span>
<svg style="left:107.80px;top:363.20px" width="6.8" height="6.8" viewBox="0 0 10 10"><rect x="0.3" y="0.3" width="9.4" height="9.4" rx="1.6" fill="#1f7a2a" stroke="#0f5018" stroke-width="0.7"/><path d="M2.4 2.2h2.4q1.6 0 1.6 1.4t-1.6 1.4q1.8 0 1.8 1.5t-1.8 1.5h-2.4z" fill="#f2f8f2"/><rect x="6.6" y="5.6" width="2.2" height="1.2" fill="#f2f8f2"/></svg>
<span class="t" id="t34" style="left:118.00px;top:361.90px;font-size:7.7px;color:#000;letter-spacing:-0.092px;">100% parsed</span>
<svg style="left:234.20px;top:388.20px" width="424" height="18" viewBox="0 0 424 18"><path d="M0.8 14.4V3.6Q0.8 1 3.4 1H60C71 1 71 14.2 83 14.2H422V14.6H0.8z" fill="url(#tg)"/><path d="M0.8 14.4V3.6Q0.8 1 3.4 1H60C71 1 71 14.2 83 14.2H422" fill="none" stroke="#9c9c9c" stroke-width="0.7"/><path d="M124.2 1.2V14" stroke="#a8a8a8" stroke-width="0.7"/></svg>
<div style="position:absolute;left:234.80px;top:402.70px;width:420.60px;height:2.50px;background:#c0c0c0;"></div>
<svg style="left:235.90px;top:391.80px" width="8.8" height="8.8" viewBox="0 0 10 10"><rect x="0.4" y="0.4" width="9.2" height="9.2" rx="2.2" fill="#1da83a" stroke="#8f86c4" stroke-width="0.5"/><path d="M5 1.3l1.15 2.5 2.7.3-2 1.85.55 2.7L5 7.3 2.6 8.65l.55-2.7-2-1.85 2.7-.3z" fill="#e9dcea"/><path d="M5 3.3l.65 1.3 1.4.2-1 1 .25 1.45L5 6.55l-1.3.7.25-1.45-1-1 1.4-.2z" fill="#2a0a2e"/></svg>
<span class="t" id="t35" style="left:246.80px;top:391.60px;font-size:7.5px;color:#000;letter-spacing:0.015px;">Prover Output</span>
<svg style="left:298.00px;top:393.40px" width="6" height="6" viewBox="0 0 6 6"><path d="M0.9 0.9L5.1 5.1M5.1 0.9L0.9 5.1" stroke="#22222c" stroke-width="1.4" stroke-linecap="square"/><path d="M1.7 1.7L4.3 4.3M4.3 1.7L1.7 4.3" stroke="#b8bcd0" stroke-width="0.6"/></svg>
<span class="t" id="t36" style="left:317.60px;top:391.60px;font-size:7.5px;color:#000;letter-spacing:0.097px;">Proof State</span>
<svg style="left:609.00px;top:393.00px" width="8.2" height="6.6" viewBox="0 0 8.2 6.6"><path d="M7.8 2v2.6h-3.6v1.7l-3.8-3 3.8-3v1.7z" fill="#fbdc6e" stroke="#d2941c" stroke-width="0.6"/><path d="M4.6 2.6h2.6" stroke="#fdf0b8" stroke-width="0.6"/></svg>
<svg style="left:623.00px;top:393.00px" width="8.2" height="6.6" viewBox="0 0 8.2 6.6"><path d="M0.4 2v2.6h3.6v1.7l3.8-3-3.8-3v1.7z" fill="#e9e9e9" stroke="#c8c8c8" stroke-width="0.6"/></svg>
<svg style="left:637.10px;top:392.30px" width="5.4" height="4.6" viewBox="0 0 5.4 4.6"><rect x="1.7" y="0.3" width="3.3" height="2.6" fill="#ddd" stroke="#222" stroke-width="0.7"/><rect x="1.7" y="0.2" width="3.3" height="0.9" fill="#222"/><rect x="0.3" y="1.7" width="3.3" height="2.5" fill="#eee" stroke="#222" stroke-width="0.7"/><rect x="0.3" y="1.6" width="3.3" height="0.9" fill="#222"/></svg>
<div style="position:absolute;left:646.9px;top:392.3px;width:6.2px;height:5.7px;box-sizing:border-box;border:0.55px solid #2a2a32;border-top-width:1.4px;background:#f2f2fa"></div>
<div style="position:absolute;left:96.70px;top:408.00px;width:0.90px;height:12.00px;background:#f4f4f4;"></div>
<div style="position:absolute;left:97.60px;top:408.00px;width:0.70px;height:12.00px;background:#a8a8a8;"></div>
<svg style="left:105.60px;top:410.60px" width="7.8" height="7.6" viewBox="0 0 7.8 7.6"><rect x="0.5" y="1.6" width="3.4" height="5.4" rx="0.7" fill="#fbfbfd" stroke="#b9c6dc" stroke-width="0.6"/><rect x="0.4" y="1.4" width="3.6" height="1.5" rx="0.5" fill="#4a7fd8"/><path d="M6 0l.55 1.1 1.2.2-.9.85.25 1.2L6 2.8l-1.1.55.25-1.2-.9-.85 1.2-.2z" fill="#f4c832" stroke="#d8a82a" stroke-width="0.3"/><circle cx="6" cy="1.7" r="0.6" fill="#fdf0a0"/></svg>
<svg style="left:122.20px;top:409.80px" width="8.8" height="8.8" viewBox="0 0 10 10"><rect x="0.4" y="0.4" width="9.2" height="9.2" rx="2.2" fill="#1da83a" stroke="#8f86c4" stroke-width="0.5"/><path d="M5 1.3l1.15 2.5 2.7.3-2 1.85.55 2.7L5 7.3 2.6 8.65l.55-2.7-2-1.85 2.7-.3z" fill="#e9dcea"/><path d="M5 3.3l.65 1.3 1.4.2-1 1 .25 1.45L5 6.55l-1.3.7.25-1.45-1-1 1.4-.2z" fill="#2a0a2e"/></svg>
<div style="position:absolute;left:501.60px;top:408.00px;width:0.70px;height:12.50px;background:#aaaaaa;"></div>
<div style="position:absolute;left:502.30px;top:408.00px;width:0.70px;height:12.50px;background:#eeeeee;"></div>
<svg style="left:642.20px;top:410.00px" width="9" height="8.8" viewBox="0 0 9 8.8"><rect x="0.4" y="1.6" width="6" height="5.4" rx="1.4" fill="#f3d9a0" stroke="#4f8fe0" stroke-width="1.1"/><circle cx="3.3" cy="4.3" r="1.3" fill="#f0a848"/><rect x="6.5" y="0.2" width="1.9" height="5.8" rx="0.7" fill="#2fa23a"/><circle cx="7.45" cy="7.5" r="1.0" fill="#2fa23a"/></svg>
</div></body></html>
